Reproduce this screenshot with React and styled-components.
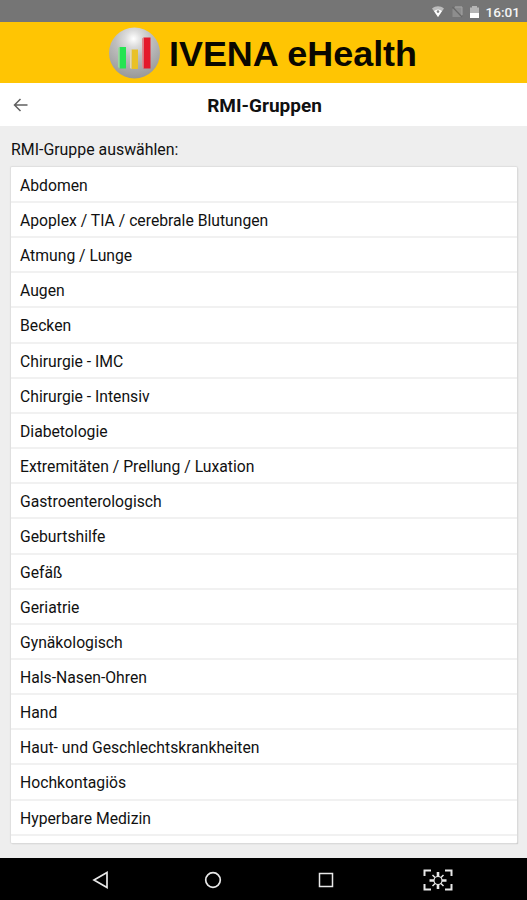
import React from 'react'
import styled, {createGlobalStyle} from 'styled-components'

const groups = [
  'Abdomen',
  'Apoplex / TIA / cerebrale Blutungen',
  'Atmung / Lunge',
  'Augen',
  'Becken',
  'Chirurgie - IMC',
  'Chirurgie - Intensiv',
  'Diabetologie',
  'Extremitäten / Prellung / Luxation',
  'Gastroenterologisch',
  'Geburtshilfe',
  'Gefäß',
  'Geriatrie',
  'Gynäkologisch',
  'Hals-Nasen-Ohren',
  'Hand',
  'Haut- und Geschlechtskrankheiten',
  'Hochkontagiös',
  'Hyperbare Medizin',
]

const GlobalStyle = createGlobalStyle`
  * {
    box-sizing: border-box;
  }

  body {
    margin: 0;
    font-family: Roboto, sans-serif;
    color: #111;
  }
`

const Screen = styled.div`
  display: flex;
  flex-direction: column;
  height: 900px;
  overflow: hidden;
  background: #eeeeee;
`

const StatusBar = styled.div`
  display: flex;
  flex: none;
  align-items: center;
  justify-content: flex-end;
  height: 22px;
  padding: 2px 7px 0 0;
  background: #757575;
`

const Clock = styled.span`
  margin-left: 5px;
  color: #f4f4f4;
  font-size: 13.6px;
  font-weight: 500;
  line-height: 20px;
`

const Brand = styled.header`
  display: flex;
  flex: none;
  align-items: center;
  height: 61px;
  padding-left: 108px;
  background: #ffc503;
`

const BrandName = styled.span`
  margin-left: 7px;
  padding-top: 2px;
  color: #0a0800;
  font: bold 35.9px/60px "Liberation Sans", Arial, sans-serif;
  white-space: nowrap;
`

const TitleBar = styled.div`
  display: grid;
  flex: none;
  grid-template-columns: 44px 1fr 42px;
  align-items: center;
  height: 43px;
  padding-top: 2px;
  background: #fff;
`

const BackButton = styled.button`
  display: flex;
  padding: 0 0 2px 13px;
  border: 0;
  background: none;
`

const Title = styled.h1`
  margin: 0;
  font-size: 19px;
  font-weight: 700;
  line-height: 41px;
  text-align: center;
`

const Content = styled.main`
  display: flex;
  flex: 1;
  flex-direction: column;
  min-height: 0;
  padding: 12px 10px 15px 11px;
`

const Label = styled.div`
  flex: none;
  height: 29px;
  font-size: 15.9px;
  line-height: 24px;
`

const List = styled.ul`
  flex: none;
  height: 676px;
  margin: 0;
  padding: 0.8px 0 0;
  overflow: hidden;
  list-style: none;
  background: #fff;
  border-radius: 1px;
  box-shadow: 0 0 1px 1px #dedede, 1px 1px 1px #b4b4b4;
`

const Item = styled.li`
  height: 35.16px;
  padding-left: 9px;
  border-bottom: 2px solid #f1f1f1;
  font-size: 15.72px;
  line-height: 35px;
  white-space: nowrap;
`

const NavBar = styled.nav`
  display: grid;
  flex: none;
  grid-template-columns: repeat(4, 112.5px);
  justify-content: center;
  align-items: center;
  justify-items: center;
  height: 42px;
  padding: 1px 0 0 12px;
  background: #000;
`

const Icon = styled.svg`
  display: block;
  flex: none;
`

function StatusIcons() {
  return (
    <Icon width="50" height="16" viewBox="0 0 50 16">
      <path d="M1 4.5C4.8 1.5 9.2 1.5 13 4.5L7 13Z" fill="#bcbcbc"/>
      <path d="M3 7C5.5 5 8.5 5 11 7L7 13Z" fill="#fff"/>
      <circle cx="7" cy="7.6" r="1.3" fill="#858585"/>
      <path d="M21.5 5L24.5 2.5H31V13H21.5Z" fill="#8d8d8d"/>
      <path d="M21.5 3L31 13" stroke="#686868" strokeWidth="1.2"/>
      <path d="M24 3H31V11" fill="none" stroke="#a3a3a3" strokeWidth="1"/>
      <path d="M39 3.5H41V2H46V3.5H48V9H39Z" fill="#b5b5b5"/>
      <path d="M39 9H48V14H39Z" fill="#fff"/>
    </Icon>
  )
}

function Logo() {
  return (
    <Icon width="54" height="54" viewBox="0 0 54 54">
      <defs>
        <radialGradient id="ball" cx=".48" cy=".22" r=".8">
          <stop offset="0" stopColor="#fff"/>
          <stop offset=".2" stopColor="#dcdcdc"/>
          <stop offset=".45" stopColor="#bebebe"/>
          <stop offset="1" stopColor="#969696"/>
        </radialGradient>
      </defs>
      <circle cx="26.5" cy="27" r="25.5" fill="url(#ball)"/>
      <path d="M11.5 21H18V42.5H11.5Z" fill="#24e451"/>
      <path d="M10 22L11.5 21V42.5L10 41Z" fill="#9ad9a0"/>
      <path d="M23.5 23.5H30V43H23.5Z" fill="#e9c127"/>
      <path d="M22 24.5L23.5 23.5V43L22 42Z" fill="#e6dab0"/>
      <path d="M35.5 11.5H42.5V42.5H35.5Z" fill="#e4192b"/>
      <path d="M34 12.5L35.5 11.5V42.5L34 41Z" fill="#df8b91"/>
    </Icon>
  )
}

function BackArrow() {
  return (
    <Icon width="16" height="16" viewBox="0 0 16 16">
      <path d="M14.5 8H2M7.5 2L1.5 8L7.5 14" fill="none" stroke="#606060" strokeWidth="1.5"/>
    </Icon>
  )
}

function CaptureIcon() {
  return (
    <Icon width="30" height="22" viewBox="0 0 30 22" fill="none" stroke="#e8e8e8">
      <path d="M1.5 7V1.5H8M22 1.5H28.5V7M28.5 15V20.5H22M8 20.5H1.5V15" strokeWidth="2"/>
      <circle cx="15" cy="11.5" r="4" strokeWidth="1.2"/>
      <path d="M15 3V7.5M15 15.5V20M6.5 11.5H11M19 11.5H23.5" strokeWidth="2.6"/>
      <path d="M9.5 6L12 8.5M20.5 6L18 8.5M9.5 17L12 14.5M20.5 17L18 14.5" strokeWidth="1.5"/>
    </Icon>
  )
}

export default function App() {
  return (
    <Screen>
      <GlobalStyle/>
      <StatusBar>
        <StatusIcons/>
        <Clock>16:01</Clock>
      </StatusBar>
      <Brand>
        <Logo/>
        <BrandName>IVENA eHealth</BrandName>
      </Brand>
      <TitleBar>
        <BackButton aria-label="Zurück">
          <BackArrow/>
        </BackButton>
        <Title>RMI-Gruppen</Title>
      </TitleBar>
      <Content>
        <Label>RMI-Gruppe auswählen:</Label>
        <List>
          {groups.map(name => <Item key={name}>{name}</Item>)}
        </List>
      </Content>
      <NavBar>
        <Icon width="18" height="18" viewBox="0 0 18 18">
          <path d="M15 1.5V16.5L2 9Z" fill="none" stroke="#e8e8e8" strokeWidth="1.7"/>
        </Icon>
        <Icon width="18" height="18" viewBox="0 0 18 18">
          <circle cx="9" cy="9" r="7.3" fill="none" stroke="#e8e8e8" strokeWidth="1.7"/>
        </Icon>
        <Icon width="16" height="16" viewBox="0 0 16 16">
          <path d="M1.5 1.5H14.5V14.5H1.5Z" fill="none" stroke="#e8e8e8" strokeWidth="1.5"/>
        </Icon>
        <CaptureIcon/>
      </NavBar>
    </Screen>
  )
}
